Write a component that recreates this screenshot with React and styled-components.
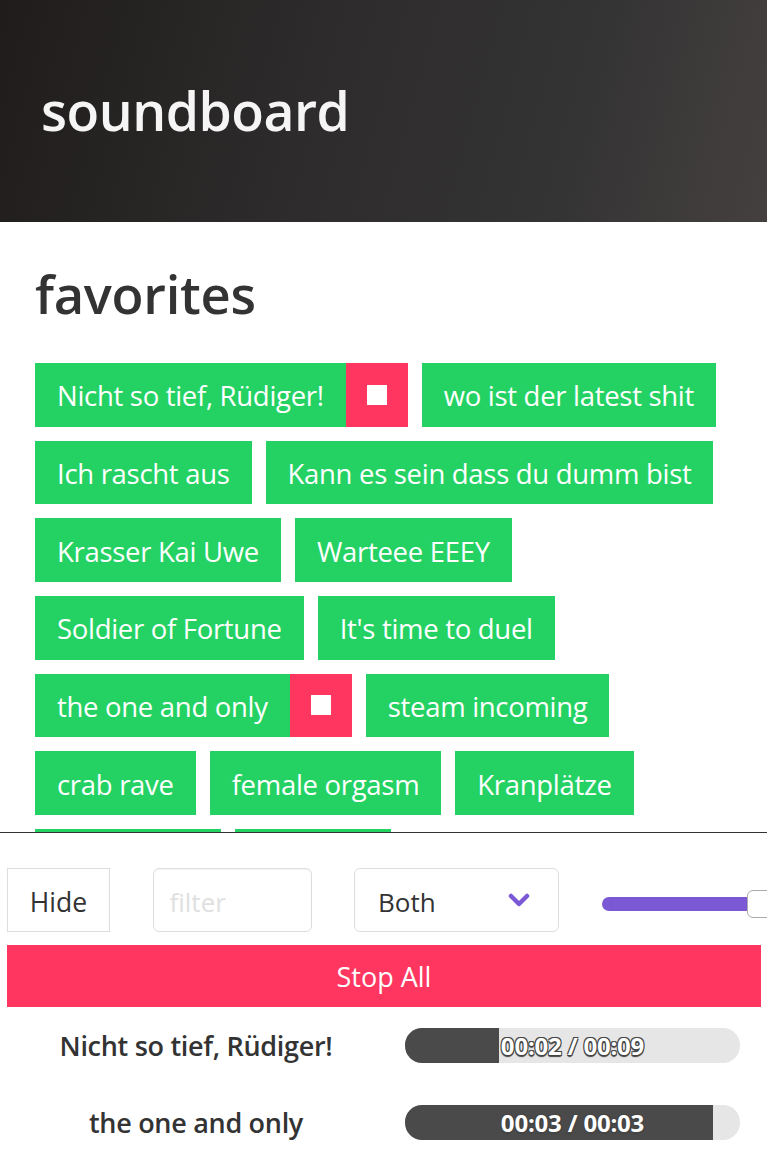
import React from "react";
import styled, { createGlobalStyle } from "styled-components";

const Global = createGlobalStyle`
  html, body { margin: 0; padding: 0; background: #fff; }
  body { font-family: "Open Sans", "Noto Sans", sans-serif; color: #333; overflow: hidden; }
  * { box-sizing: border-box; }
`;

const Page = styled.div`
  height: 1168px;
  overflow: hidden;
  position: relative;
`;

const Header = styled.header`
  height: 222px;
  background: linear-gradient(105deg, #201c1c 0%, #2d2b2b 40%, #353434 75%, #454040 100%);
  display: flex;
  align-items: center;
  padding-left: 41px;
`;

const Title = styled.h1`
  margin: 0;
  color: #f5f5f5;
  font-size: 53.5px;
  font-weight: 600;
  letter-spacing: -0.5px;
  padding-bottom: 2px;
`;

const Main = styled.main`
  padding: 36px 35px 0 35px;
`;

const SectionTitle = styled.h2`
  margin: 0 0 33px 0;
  font-size: 52.5px;
  font-weight: 600;
  color: #333;
  line-height: 72px;
  letter-spacing: -0.3px;
`;

const Board = styled.div`
  display: flex;
  flex-wrap: wrap;
  gap: 14px 14px;
`;

const Sound = styled.div`
  display: flex;
  height: 63.67px;
`;

const SoundLabel = styled.button`
  border: none;
  background: #24d264;
  color: #fff;
  font-family: inherit;
  font-size: 27.5px;
  padding: 2px 22px 0 22px;
  height: 100%;
  letter-spacing: -0.3px;
  white-space: nowrap;
  cursor: pointer;
`;

const StopSquare = styled.button`
  border: none;
  width: 62px;
  height: 100%;
  background: #ff3660;
  display: flex;
  align-items: center;
  justify-content: center;
  &::after {
    content: "";
    width: 20px;
    height: 20px;
    background: #fff;
  }
`;

const Panel = styled.div`
  position: absolute;
  left: 0;
  right: 0;
  bottom: 0;
  height: 336px;
  background: #fff;
  border-top: 1.5px solid #333;
  padding: 35px 0 0 7px;
`;

const Controls = styled.div`
  display: flex;
  align-items: center;
  gap: 42.5px;
  height: 64px;
  white-space: nowrap;
`;

const HideButton = styled.button`
  width: 103px;
  height: 64px;
  background: #fff;
  border: 1px solid #ddd;
  font-family: inherit;
  font-size: 26.5px;
  color: #333;
  padding: 4px 0 0 0;
  flex-shrink: 0;
`;

const Filter = styled.input`
  width: 159px;
  height: 64px;
  border: 1px solid #ddd;
  border-radius: 6px;
  font-family: inherit;
  font-size: 26px;
  padding: 4px 0 0 16px;
  color: #333;
  flex-shrink: 0;
  box-shadow: inset 0 1px 2px rgba(0,0,0,0.05);
  &::placeholder { color: #e0e0e0; }
`;

const Select = styled.div`
  width: 205px;
  height: 64px;
  border: 1px solid #ddd;
  border-radius: 6px;
  display: flex;
  align-items: center;
  justify-content: space-between;
  padding: 0 28px 0 23px;
  font-size: 26px;
  color: #333;
  flex-shrink: 0;
`;

const SelectValue = styled.span`
  padding-top: 4px;
`;

const Slider = styled.div`
  position: relative;
  width: 200px;
  height: 14px;
  flex-shrink: 0;
  border-radius: 7px;
  background: #7b59d4;
  margin-top: 8px;
`;

const Thumb = styled.div`
  position: absolute;
  left: 145px;
  top: -7px;
  width: 34px;
  height: 28px;
  background: #fff;
  border: 1px solid #aaa;
  border-radius: 6px;
`;

const StopAll = styled.button`
  display: block;
  width: 754px;
  height: 62px;
  margin-top: 13px;
  background: #ff3660;
  border: none;
  color: #fff;
  font-family: inherit;
  font-size: 27px;
  padding: 1px 0 0 0;
`;

const Playing = styled.div`
  display: grid;
  grid-template-columns: 378px 335px;
  grid-auto-rows: 35px;
  column-gap: 20px;
  row-gap: 42px;
  margin-top: 21px;
  align-items: center;
`;

const PlayTitle = styled.div`
  text-align: center;
  font-size: 27px;
  line-height: 35px;
  font-weight: 600;
  color: #333;
  letter-spacing: -0.3px;
  white-space: nowrap;
`;

const Bar = styled.div`
  position: relative;
  height: 35px;
  border-radius: 17px;
  background: #e6e6e6;
  overflow: hidden;
`;

const Fill = styled.div`
  height: 100%;
  background: #4a4a4a;
`;

const Time = styled.div`
  position: absolute;
  inset: 0;
  display: flex;
  align-items: center;
  justify-content: center;
  color: #fff;
  font-weight: 700;
  font-size: 24px;
  letter-spacing: -0.2px;
  padding-bottom: 1px;
  text-shadow: -1px -1px 0 #444, 1px -1px 0 #444, -1px 1px 0 #444, 1px 1px 0 #444, 0 2px 1px #444;
`;

const Chevron = () => (
  <svg width="22" height="16" viewBox="0 0 22 16">
    <path d="M3 4 L11 12 L19 4" fill="none" stroke="#7b59d4" strokeWidth="4.5" strokeLinecap="round" strokeLinejoin="round" />
  </svg>
);

const sounds = [
  { name: "Nicht so tief, Rüdiger!", playing: true },
  { name: "wo ist der latest shit" },
  { name: "Ich rascht aus" },
  { name: "Kann es sein dass du dumm bist" },
  { name: "Krasser Kai Uwe" },
  { name: "Warteee EEEY" },
  { name: "Soldier of Fortune" },
  { name: "It's time to duel" },
  { name: "the one and only", playing: true },
  { name: "steam incoming" },
  { name: "crab rave" },
  { name: "female orgasm" },
  { name: "Kranplätze" },
  { name: "Hallo Leute" },
  { name: "Sehr gut!" },
];

const playing = [
  { name: "Nicht so tief, Rüdiger!", pct: 28, time: "00:02 / 00:09" },
  { name: "the one and only", pct: 92, time: "00:03 / 00:03" },
];

export default function App() {
  return (
    <Page>
      <Global />
      <Header>
        <Title>soundboard</Title>
      </Header>
      <Main>
        <SectionTitle>favorites</SectionTitle>
        <Board>
          {sounds.map((s) => (
            <Sound key={s.name}>
              <SoundLabel>{s.name}</SoundLabel>
              {s.playing && <StopSquare aria-label="stop" />}
            </Sound>
          ))}
        </Board>
      </Main>
      <Panel>
        <Controls>
          <HideButton>Hide</HideButton>
          <Filter placeholder="filter" />
          <Select>
            <SelectValue>Both</SelectValue>
            <Chevron />
          </Select>
          <Slider>
            <Thumb />
          </Slider>
        </Controls>
        <StopAll>Stop All</StopAll>
        <Playing>
          {playing.map((p) => (
            <React.Fragment key={p.name}>
              <PlayTitle>{p.name}</PlayTitle>
              <Bar>
                <Fill style={{ width: `${p.pct}%` }} />
                <Time>{p.time}</Time>
              </Bar>
            </React.Fragment>
          ))}
        </Playing>
      </Panel>
    </Page>
  );
}
